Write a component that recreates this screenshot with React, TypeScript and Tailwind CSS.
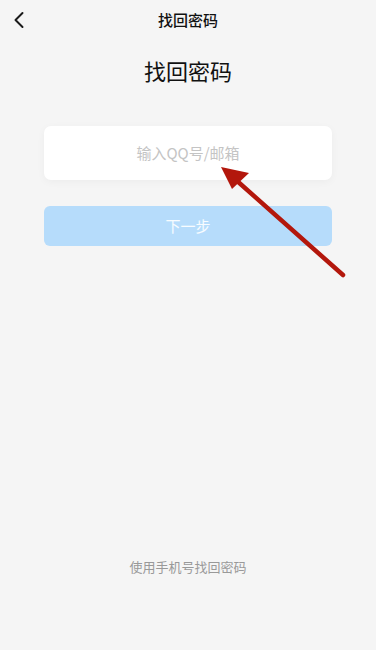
import { ChevronLeft } from 'lucide-react';

const font = { fontFamily: '"Noto Sans CJK SC", "Noto Sans", sans-serif' };

export default function App() {
  return (
    <div className="relative w-[376px] h-[650px] bg-[#f5f5f5] flex flex-col items-center overflow-hidden" style={font}>
      {/* header */}
      <div className="w-full h-10 flex items-center justify-center relative">
        <button className="absolute left-[5px] top-[6px] text-[#1a1a1a]">
          <ChevronLeft size={28} strokeWidth={1.7} />
        </button>
        <span className="text-[15px] font-medium text-[#111]">找回密码</span>
      </div>

      <h1 className="mt-[14px] text-[22px] text-[#111] leading-[32px]">找回密码</h1>

      <div className="mt-[40px] w-[288px] h-[54px] bg-white rounded-[7px] shadow-[0_2px_8px_rgba(0,0,0,0.04)] flex items-center justify-center">
        <span className="text-[15px] text-[#c4c4c4]">输入QQ号/邮箱</span>
      </div>

      <button className="mt-[26px] w-[288px] h-[40px] bg-[#b6dcfb] rounded-[6px] text-[15px] text-white/90">
        下一步
      </button>

      <div className="flex-1" />
      <span className="mb-[74px] text-[13px] text-[#999]">使用手机号找回密码</span>

      {/* red arrow annotation */}
      <svg className="absolute left-0 top-0 pointer-events-none" width="376" height="650" viewBox="0 0 376 650">
        <line x1="343" y1="275" x2="236" y2="180" stroke="#b3170c" strokeWidth="4.5" strokeLinecap="round" />
        <polygon points="221,167 249,173 232,189" fill="#b3170c" />
      </svg>
    </div>
  );
}
